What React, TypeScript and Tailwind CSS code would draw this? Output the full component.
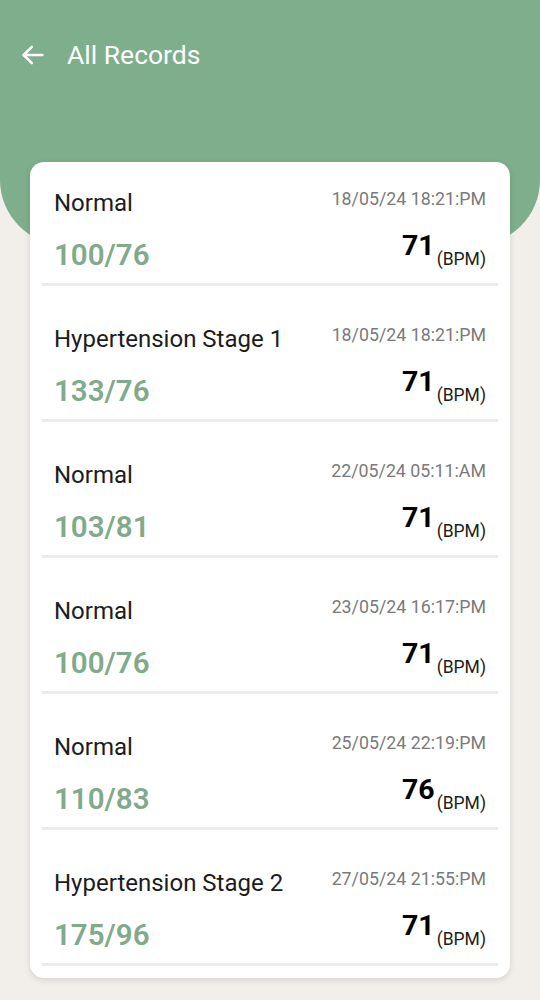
import React from 'react';

interface BpRecord {
  status: string;
  date: string;
  pressure: string;
  pulse: number;
}

const records: BpRecord[] = [
  { status: 'Normal', date: '18/05/24 18:21:PM', pressure: '100/76', pulse: 71 },
  { status: 'Hypertension Stage 1', date: '18/05/24 18:21:PM', pressure: '133/76', pulse: 71 },
  { status: 'Normal', date: '22/05/24 05:11:AM', pressure: '103/81', pulse: 71 },
  { status: 'Normal', date: '23/05/24 16:17:PM', pressure: '100/76', pulse: 71 },
  { status: 'Normal', date: '25/05/24 22:19:PM', pressure: '110/83', pulse: 76 },
  { status: 'Hypertension Stage 2', date: '27/05/24 21:55:PM', pressure: '175/96', pulse: 71 },
];

const RecordRow: React.FC<{ record: BpRecord }> = ({ record }) => (
  <div className="mx-3 flex h-[124px] flex-col border-b-[3px] border-[#eaecee] px-3 pt-[27px]">
    <div className="flex items-start justify-between">
      <span className="text-[24px] leading-[28px] text-[#1c1c1c]">{record.status}</span>
      <span className="-mt-[1px] text-[17.8px] leading-[22px] text-[#7a7a7a]">{record.date}</span>
    </div>
    <div className="mt-[12px] flex items-start justify-between">
      <span className="pt-[8px] text-[29.5px] font-semibold leading-[36px] text-[#80aa8b]">
        {record.pressure}
      </span>
      <div className="flex items-end">
        <span className="text-[28.5px] font-bold leading-[34px] text-black">{record.pulse}</span>
        <span className="ml-[2px] -mb-[6px] text-[17.5px] leading-[20px] text-[#1c1c1c]">(BPM)</span>
      </div>
    </div>
  </div>
);

export default function App() {
  return (
    <div className="min-h-[1000px] bg-[#f2efea]" style={{ fontFamily: 'Roboto, "Noto Sans", sans-serif' }}>
      <div className="h-[245px] rounded-b-[65px] bg-[#7fae8c] pt-[40px]">
        <div className="flex items-center px-[19px]">
          <svg width="28" height="28" viewBox="0 0 24 24" fill="none" stroke="white" strokeWidth="2.2" strokeLinecap="round" strokeLinejoin="round">
            <path d="M20 12H4" />
            <path d="M11 5l-7 7 7 7" />
          </svg>
          <span className="ml-[20px] text-[26.5px] leading-[30px] text-white">All Records</span>
        </div>
      </div>
      <div className="mx-[30px] -mt-[83px] flex flex-col gap-[12px] rounded-[14px] bg-white pb-[12px] shadow-[0_2px_6px_rgba(0,0,0,0.12)]">
        {records.map((r, i) => (
          <RecordRow key={i} record={r} />
        ))}
      </div>
    </div>
  );
}
